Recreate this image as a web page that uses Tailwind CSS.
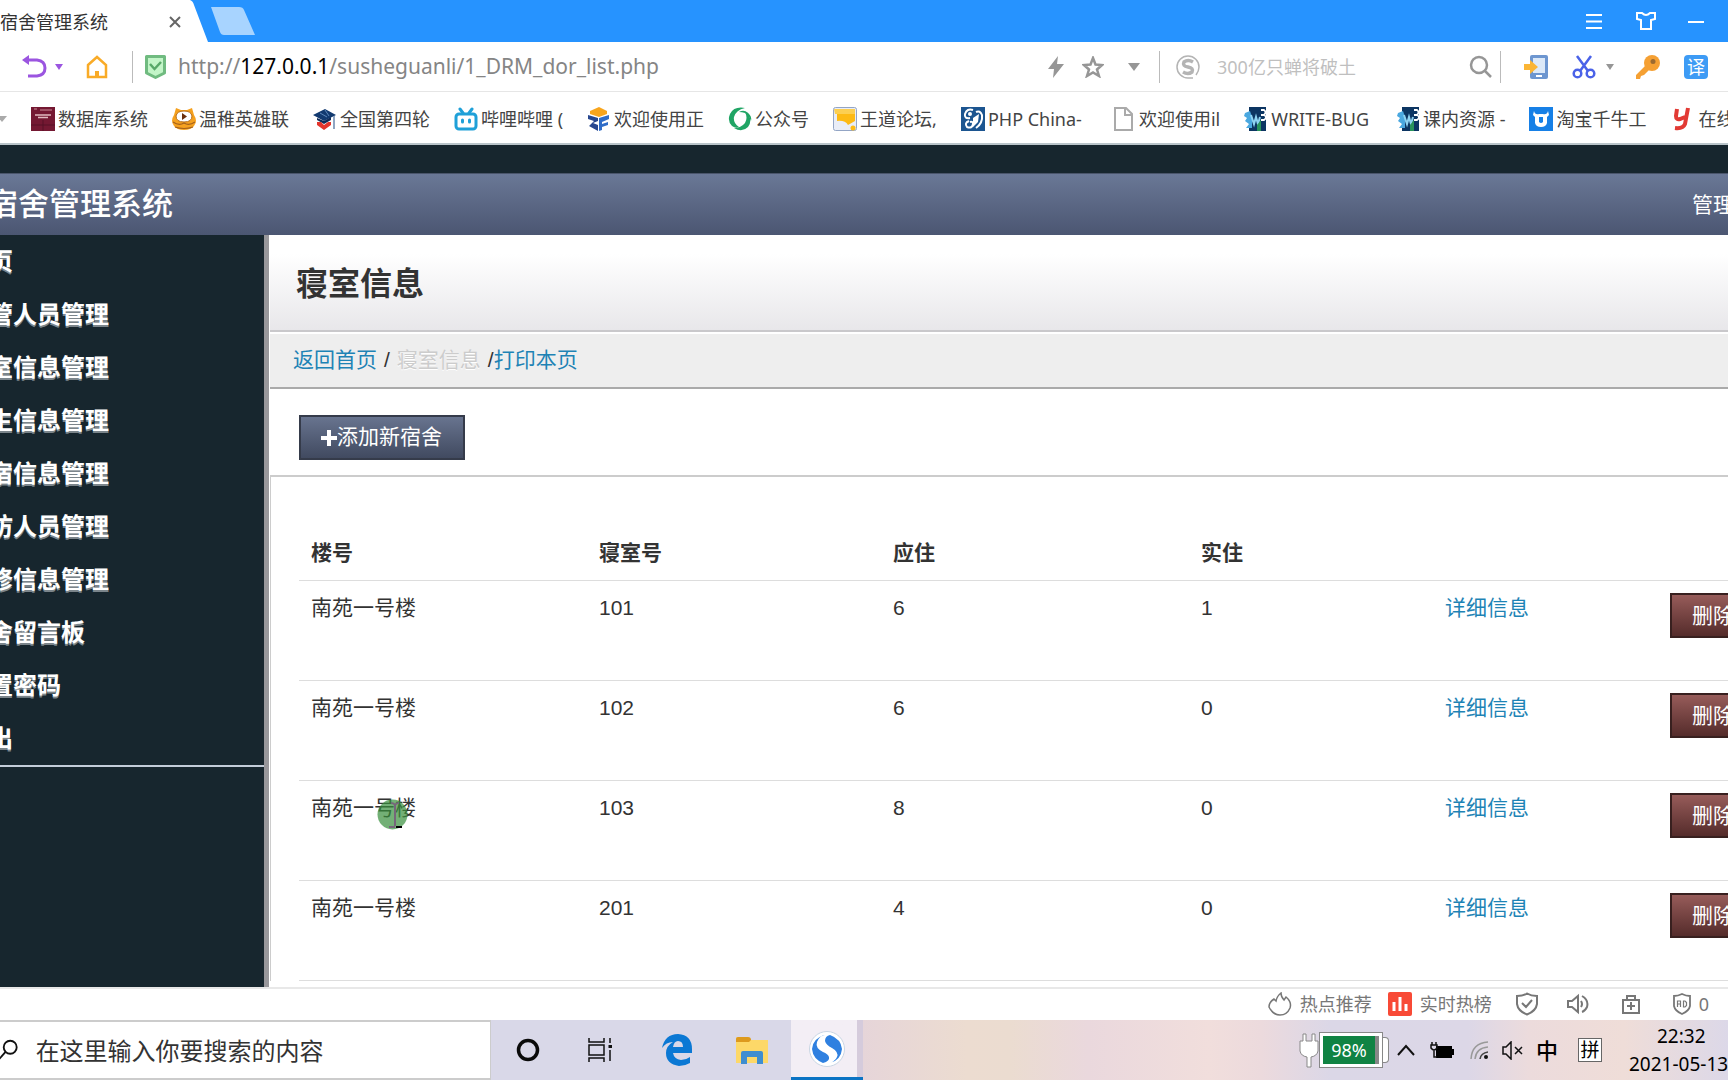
<!DOCTYPE html>
<html lang="zh-CN">
<head>
<meta charset="utf-8">
<meta name="viewport" content="width=device-width, initial-scale=1">
<title>宿舍管理系统</title>
<script src="https://cdn.jsdelivr.net/npm/@tailwindcss/browser@4"></script>
</head>
<body class="flex h-screen flex-col overflow-hidden bg-white font-['Noto_Sans','Noto_Sans_CJK_SC',sans-serif] text-lg text-[#444]">

<!-- Tab strip -->
<header class="flex h-[42px] shrink-0 bg-[#2693ff]">
  <div class="flex h-full w-[190px] items-center bg-white pt-0.5">
    <span class="flex-1 whitespace-nowrap text-[#333]">宿舍管理系统</span>
    <button aria-label="关闭标签" class="mr-[9px]"><svg class="size-3" viewBox="0 0 12 12" fill="none" stroke="#666" stroke-width="2"><path d="M1 1l10 10M11 1L1 11"/></svg></button>
  </div>
  <svg class="h-full w-[18px]" viewBox="0 0 18 42" fill="#fff"><path d="M0 0Q3 1 4 5L18 42H0Z"/></svg>
  <button aria-label="新标签" class="ml-0.5"><svg class="h-7 w-[45px]" viewBox="0 0 45 28"><path d="M1 0H29Q33 0 34 3L45 28H14Q11 28 10 25Z" fill="#a8d4ff"/></svg></button>
  <div class="ml-auto flex items-center gap-8 pr-6">
    <button aria-label="菜单"><svg class="h-5 w-4" viewBox="0 0 16 20" stroke="#fff" stroke-width="2"><path d="M0 4H16M0 10.500H16M0 17H16"/></svg></button>
    <button aria-label="皮肤" class="ml-0.5"><svg class="size-5" viewBox="0 0 20 20" fill="none" stroke="#fff" stroke-width="2"><path d="M1 2H6Q10 6 14 2H19V8L15 9V18H5V9L1 8Z"/></svg></button>
    <button aria-label="最小化"><svg class="h-5 w-4" viewBox="0 0 16 20" stroke="#fff" stroke-width="2"><path d="M0 11H16"/></svg></button>
  </div>
</header>

<!-- Address bar -->
<div class="flex h-[50px] shrink-0 items-center border-b border-[#e6e6e6] pr-5">
  <button aria-label="后退" class="ml-[22px]"><svg class="h-6 w-[25px]" viewBox="0 0 25 24" fill="none" stroke="#9b55e0" stroke-width="3"><path d="M4 5H15Q23 6 23 13T15 21H6"/><path d="M0 5L7 0V10Z" fill="#9b55e0" stroke="none"/></svg></button>
  <svg class="ml-2 h-1.5 w-2" viewBox="0 0 8 6" fill="#9b55e0"><path d="M0 0H8L4 6Z"/></svg>
  <button aria-label="主页" class="ml-[23px]"><svg class="h-6 w-[22px]" viewBox="0 0 22 24" fill="none" stroke="#f9ab27" stroke-width="2.500"><path d="M2 10L11 2L20 10V22H2Z"/><path d="M9 23V16H13V23Z" fill="#f9ab27" stroke="none"/></svg></button>
  <span class="ml-6 h-8 w-px bg-[#bbb]"></span>
  <svg class="ml-3 h-6 w-[21px]" viewBox="0 0 21 24"><path d="M1.500 1.500H19.500V18L10.500 22.500L1.500 18Z" fill="#c3f5c8" stroke="#70bb80" stroke-width="3" stroke-linejoin="round"/><path d="M5 9L9.500 14L16 7" fill="none" stroke="#58a868" stroke-width="2.500"/></svg>
  <div contenteditable="true" role="textbox" aria-label="网址" class="ml-3 flex-1 whitespace-nowrap text-[21px] text-[#858585]">http://<span class="text-black">127.0.0.1</span>/susheguanli/1_DRM_dor_list.php</div>
  <button aria-label="极速模式"><svg class="h-[22px] w-4" viewBox="0 0 16 22" fill="#969696"><path d="M10 0L0 13H6L5 22L16 8H9Z"/></svg></button>
  <button aria-label="收藏" class="ml-[18px]"><svg class="size-[22px]" viewBox="0 0 22 22" fill="none" stroke="#969696" stroke-width="2.500"><path d="M11 2L13.500 8.500L20 9L15 13.500L17 20L11 16.500L5 20L7 13.500L2 9L8.500 8.500Z"/></svg></button>
  <svg class="ml-6 h-2 w-3" viewBox="0 0 12 8" fill="#969696"><path d="M0 0H12L6 8Z"/></svg>
  <span class="ml-[19px] h-8 w-px bg-[#bbb]"></span>
  <svg class="ml-4 size-6" viewBox="0 0 24 24" fill="none" stroke="#b4b4b4"><path d="M20 20Q23 16 23 12A11 11 0 1 0 12 23H17" stroke-width="1.500"/><path d="M17 7Q12 4 8 7Q6 11 12 12Q18 13 16 17Q12 20 7 17" stroke-width="3.500"/></svg>
  <input type="text" aria-label="搜索" placeholder="300亿只蝉将破土" class="ml-[17px] w-[252px] bg-transparent text-lg outline-none placeholder:text-[#bfbfbf]">
  <button aria-label="搜索按钮"><svg class="size-[23px]" viewBox="0 0 23 23" fill="none" stroke="#969696" stroke-width="2.500"><circle cx="10" cy="10" r="8"/><path d="M16 16L22 22"/></svg></button>
  <span class="ml-2 h-8 w-px bg-[#bbb]"></span>
  <button aria-label="手机" class="ml-[23px]"><svg class="size-6" viewBox="0 0 24 24"><rect x="6" y="0" width="18" height="24" rx="2" fill="#6d96d0"/><rect x="9" y="3" width="12" height="15" fill="#dce9f8"/><rect x="12" y="20" width="6" height="2" fill="#fff"/><path d="M0 9H6V5L14 12L6 19V15H0Z" fill="#fbb535"/></svg></button>
  <button aria-label="截图" class="ml-6"><svg class="size-6" viewBox="0 0 24 24" fill="none" stroke="#4a62e8" stroke-width="2.500"><path d="M5 1L16 16M19 1L8 16"/><circle cx="5.500" cy="18.500" r="3.800"/><circle cx="18.500" cy="18.500" r="3.800"/></svg></button>
  <svg class="ml-2.5 h-1.5 w-2" viewBox="0 0 8 6" fill="#969696"><path d="M0 0H8L4 6Z"/></svg>
  <button aria-label="密码" class="ml-[22px]"><svg class="size-6" viewBox="0 0 24 24"><circle cx="16" cy="8" r="8" fill="#f5a033"/><path d="M9 11L0 20V24H4L5 21L8 20L13 15Z" fill="#f5a033"/><circle cx="17" cy="6.500" r="2.500" fill="#9c6a30"/></svg></button>
  <button aria-label="翻译" class="ml-6 size-6 rounded bg-[#3d9bf5] text-lg leading-6 text-white">译</button>
</div>

<!-- Bookmarks -->
<nav class="flex h-[53px] shrink-0 items-center gap-6 overflow-hidden whitespace-nowrap border-b-2 border-[#b9c4c9] pt-0.5">
  <svg class="h-1.5 w-[7px] shrink-0" viewBox="0 0 7 6" fill="#aaa"><path d="M-3 0H7L2 6Z"/></svg>
  <a href="#" class="flex items-center gap-[3px]"><svg class="size-6" viewBox="0 0 24 24"><path fill="#741832" d="M0 0H24V24H0Z"/><path d="M4 8H20M7 10.500H17" stroke="#e0b8be" stroke-width="1.500"/><path d="M3 2H6M9 3H21" stroke="#c98a96"/><path d="M0 18H24M12 13V24" stroke="#571026"/></svg>数据库系统</a>
  <a href="#" class="flex items-center gap-[3px]"><svg class="size-6" viewBox="0 0 24 24"><path d="M2 8L4 1L9 3H15L20 1L22 8Q26 14 22 19Q19 23 12 23T2 19Q-2 14 2 8Z" fill="#f5a11f"/><path d="M4 9Q5 4 12 4T20 9Q20 15 12 15T4 9Z" fill="#fff" stroke="#b86e18"/><path d="M10 6L15 9.500L10 13Z" fill="#6b2f0c"/><path d="M1 15Q7 19 12 16Q17 19 23 15M3 20Q12 23 21 20" fill="none" stroke="#a4601a" stroke-width="1.200"/></svg>温稚英雄联</a>
  <a href="#" class="flex items-center gap-[3px]"><svg class="size-6" viewBox="0 0 24 24"><path d="M0 8L12 2L23 8L11 14Z" fill="#123a70"/><path d="M4 11V13L11 17L18 13V10L11 14Z" fill="#0e2c5a"/><path d="M4 15L8 15L11 18L15 15H18V18L11 23L4 18Z" fill="#e3352c"/><path d="M7 6L14 10M12 3L16 9" stroke="#5d88bb"/><path d="M21 9V22" stroke="#8fa5c2" stroke-width="2"/></svg>全国第四轮</a>
  <a href="#" class="flex items-center gap-[3px]"><svg class="size-6" viewBox="0 0 24 24" fill="none" stroke="#1fa0d8" stroke-width="3" stroke-linecap="round"><rect x="2" y="7" width="20" height="15" rx="3"/><path d="M6 2L9 6M18 2L15 6M8.500 13V15M15.500 13V15"/></svg>哔哩哔哩 (</a>
  <a href="#" class="flex items-center gap-[3px]"><svg class="size-6" viewBox="0 0 24 24"><path d="M3 4L12 0L20 4V7L12 10L3 7Z" fill="#f8a51c"/><path d="M1 8L11 11V14L6 16L11 18V24L2 19L7 14L1 12Z" fill="#27478f"/><path d="M12 11L22 8V12L15 15V17L21 15V18L15 20V23L12 24Z" fill="#2f6cc8"/></svg>欢迎使用正</a>
  <a href="#" class="flex items-center gap-[3px]"><svg class="size-6" viewBox="0 0 24 24" fill="#20a565"><path d="M17 1Q6 -1 2 7Q-1 14 4 19Q8 22 11 20Q5 16 6 10Q8 3 17 1Z"/><path d="M6 21Q14 26 20 20Q24 15 21 8Q20 5 17 5Q20 11 17 16Q13 21 6 21Z"/><path d="M11 5Q16 2 20 6Q24 9 23 14Q21 8 17 6Q14 5 11 5Z"/></svg>公众号</a>
  <a href="#" class="flex items-center gap-[3px]"><svg class="size-6" viewBox="0 0 24 24"><rect x=".5" y=".5" width="23" height="23" rx="2" fill="#e9edf7" stroke="#93a5c5"/><path d="M4 3L22 2L22 14L15 18Q12 13 4 14Z" fill="#fdba15"/><path d="M1 2H22V7H2Z" fill="#fccf52"/><circle cx="20" cy="21" r="2.500" fill="#fdba15"/></svg>王道论坛,</a>
  <a href="#" class="flex items-center gap-[3px]"><svg class="size-6" viewBox="0 0 24 24"><path fill="#1c5590" d="M0 0H24V24H0Z"/><path d="M12 3Q6 1 4 7Q3 12 9 11M8 14Q3 16 6 20Q11 22 12 17Q12 14 9 15M15 21Q22 16 21 8Q19 3 15 5" fill="none" stroke="#fff" stroke-width="2"/><circle cx="9" cy="7" r="2" fill="#fff"/><path d="M12 11L18 7L17 15L12 20Z" fill="#fff"/></svg>PHP China-</a>
  <a href="#" class="ml-2 flex items-center gap-[5px]"><svg class="h-6 w-5" viewBox="0 0 20 24" fill="none" stroke="#aaa" stroke-width="2"><path d="M1 1H12L18 7V23H1ZM11 1V8H18"/></svg>欢迎使用il</a>
  <a href="#" class="flex items-center gap-[3px]"><svg class="size-6" viewBox="0 0 24 24"><path d="M5 0H22V24H5Z" fill="#0c3562"/><path d="M1 6L6 4L8 10V21H2L5 17L1 14L3 11L0 9Z" fill="#4aa8e0"/><path d="M7 8L10 17L12 10L14 17L16 10" fill="none" stroke="#8ed3f2" stroke-width="2"/><path d="M17 3H20Q23 5 20 8Q24 10 20 13H17M17 8H20" fill="none" stroke="#fff" stroke-width="1.800"/><path d="M13 18L17 13V24H13Z" fill="#29935b"/></svg>WRITE-BUG</a>
  <a href="#" class="ml-1 flex items-center gap-0.5"><svg class="size-6" viewBox="0 0 24 24"><path d="M5 0H22V24H5Z" fill="#0c3562"/><path d="M1 6L6 4L8 10V21H2L5 17L1 14L3 11L0 9Z" fill="#4aa8e0"/><path d="M7 8L10 17L12 10L14 17L16 10" fill="none" stroke="#8ed3f2" stroke-width="2"/><path d="M17 3H20Q23 5 20 8Q24 10 20 13H17M17 8H20" fill="none" stroke="#fff" stroke-width="1.800"/><path d="M13 18L17 13V24H13Z" fill="#29935b"/></svg>课内资源 -</a>
  <a href="#" class="flex items-center gap-[3px]"><svg class="size-6" viewBox="0 0 24 24"><path fill="#1780e6" d="M0 0H24V24H0Z"/><path d="M5 4Q6 8 10 7H14Q18 8 19 4L20 8L18 10V16Q17 20 12 20T6 16V10L4 8Z" fill="#fff"/><path d="M10 10H14V15Q12 17 10 15Z" fill="#1780e6"/></svg>淘宝千牛工</a>
  <a href="#" class="ml-1 flex items-center gap-2"><svg class="h-6 w-4" viewBox="0 0 16 24" fill="none" stroke="#e23a34" stroke-width="4"><path d="M3 2L2 9Q2 13 6 12L11 10M14 1L11 17Q9 22 1 21"/></svg>在线</a>
</nav>

<!-- Web page viewport -->
<div class="flex min-h-0 flex-1 flex-col overflow-hidden bg-[#17262e] font-['Liberation_Sans','Noto_Sans_CJK_SC',sans-serif] text-[21px] text-[#333]">
  <div class="flex h-[90px] shrink-0 items-end">
    <div class="flex h-[62px] w-full items-center justify-between overflow-hidden border-t border-[#4a556b] bg-linear-to-b from-[#6a7896] to-[#4b5672] pt-0.5 text-white">
      <h1 class="-ml-[13px] whitespace-nowrap font-['Liberation_Serif','Noto_Sans_CJK_SC',serif] text-[31px] font-medium">宿舍管理系统</h1>
      <span class="-mr-1.5 whitespace-nowrap">管理</span>
    </div>
  </div>
  <div class="flex min-h-0 flex-1">
    <aside class="w-[264px] shrink-0 overflow-hidden">
      <ul class="border-b-2 border-[#c3cdd9] text-2xl font-bold leading-[53px] text-white [text-shadow:0_2px_0_#7b858b]">
        <li><a href="#" class="-ml-[11px]">页</a></li>
        <li><a href="#" class="-ml-[11px]">管人员管理</a></li>
        <li><a href="#" class="-ml-[11px]">室信息管理</a></li>
        <li><a href="#" class="-ml-[11px]">生信息管理</a></li>
        <li><a href="#" class="-ml-[11px]">宿信息管理</a></li>
        <li><a href="#" class="-ml-[11px]">访人员管理</a></li>
        <li><a href="#" class="-ml-[11px]">修信息管理</a></li>
        <li><a href="#" class="-ml-[11px]">舍留言板</a></li>
        <li><a href="#" class="-ml-[11px]">置密码</a></li>
        <li><a href="#" class="-ml-[11px]">出</a></li>
      </ul>
    </aside>
    <main class="min-w-0 flex-1 overflow-hidden border-l-[5px] border-[#98979b] bg-white pl-px">
      <div class="flex h-[97px] items-center border-b-2 border-[#c9c8cb] bg-linear-to-b from-white from-20% to-[#e8e7ea] pl-[26px] pt-1">
        <h2 class="text-[32px] font-bold">寝室信息</h2>
      </div>
      <div class="flex h-[57px] items-center border-b-2 border-t-2 border-b-[#aaa] border-t-white bg-[#eee] pl-[23px]"><a href="#" class="text-[#1e83b5]">返回首页</a><span class="mx-[7px]">/</span><span class="text-[#ccc] [text-shadow:0_1px_0_#fff]">寝室信息</span><span class="ml-[7px]">/</span><a href="#" class="text-[#1e83b5]">打印本页</a></div>
      <div class="px-[29px] pb-[15px] pt-[26px]">
        <button class="flex h-[45px] w-[166px] items-center border-2 border-[#353b4a] bg-linear-to-b from-[#68748f] to-[#414a60] pl-5 text-white"><svg class="size-4" viewBox="0 0 16 16" fill="#fff"><path d="M6 0H10V6H16V10H10V16H6V10H0V6H6Z"/></svg>添加新宿舍</button>
      </div>
      <section class="border-l border-t-2 border-[#ccc] pl-7 pt-[51px]">
        <table class="w-full table-fixed border-collapse text-left">
          <colgroup><col class="w-[288px]"><col class="w-[294px]"><col class="w-[308px]"><col class="w-[244px]"><col class="w-[213px]"><col></colgroup>
          <thead>
            <tr class="h-[52px] font-bold"><th class="pl-3">楼号</th><th class="pl-3">寝室号</th><th class="pl-3">应住</th><th class="pl-3">实住</th><th></th><th></th></tr>
          </thead>
          <tbody class="leading-[29px]">
            <tr class="h-[100px] border-t border-[#ddd] align-top"><td class="pl-3 pt-3">南苑一号楼</td><td class="pl-3 pt-3">101</td><td class="pl-3 pt-3">6</td><td class="pl-3 pt-3">1</td><td class="pl-3 pt-3"><a href="#" class="text-[#1e83b5]">详细信息</a></td><td class="pl-6 pt-3"><button class="flex h-[45px] w-[87px] items-center border-2 border-[#38201f] bg-linear-to-b from-[#975c5a] to-[#552c2b] pl-5 text-white whitespace-nowrap">删除</button></td></tr>
            <tr class="h-[100px] border-t border-[#ddd] align-top"><td class="pl-3 pt-3">南苑一号楼</td><td class="pl-3 pt-3">102</td><td class="pl-3 pt-3">6</td><td class="pl-3 pt-3">0</td><td class="pl-3 pt-3"><a href="#" class="text-[#1e83b5]">详细信息</a></td><td class="pl-6 pt-3"><button class="flex h-[45px] w-[87px] items-center border-2 border-[#38201f] bg-linear-to-b from-[#975c5a] to-[#552c2b] pl-5 text-white whitespace-nowrap">删除</button></td></tr>
            <tr class="h-[100px] border-t border-[#ddd] align-top"><td class="relative pl-3 pt-3">南苑一号楼
              <svg class="absolute left-[78px] top-[18px] size-[31px]" viewBox="0 0 31 31"><circle cx="15.500" cy="15.500" r="15" fill="#388e3c" fill-opacity=".7"/><path d="M14 4Q17 4 18 6Q19 4 22 4M18 6V27M12 28H18" fill="none" stroke="#76667a" stroke-width="2"/><path d="M19 28H25" stroke="#000" stroke-width="2"/></svg></td><td class="pl-3 pt-3">103</td><td class="pl-3 pt-3">8</td><td class="pl-3 pt-3">0</td><td class="pl-3 pt-3"><a href="#" class="text-[#1e83b5]">详细信息</a></td><td class="pl-6 pt-3"><button class="flex h-[45px] w-[87px] items-center border-2 border-[#38201f] bg-linear-to-b from-[#975c5a] to-[#552c2b] pl-5 text-white whitespace-nowrap">删除</button></td></tr>
            <tr class="h-[100px] border-b border-t border-[#ddd] align-top"><td class="pl-3 pt-3">南苑一号楼</td><td class="pl-3 pt-3">201</td><td class="pl-3 pt-3">4</td><td class="pl-3 pt-3">0</td><td class="pl-3 pt-3"><a href="#" class="text-[#1e83b5]">详细信息</a></td><td class="pl-6 pt-3"><button class="flex h-[45px] w-[87px] items-center border-2 border-[#38201f] bg-linear-to-b from-[#975c5a] to-[#552c2b] pl-5 text-white whitespace-nowrap">删除</button></td></tr>
          </tbody>
        </table>
      </section>
    </main>
  </div>
</div>

<!-- Browser status bar -->
<footer class="flex h-[33px] shrink-0 items-center justify-end border-t-2 border-[#e8e8e8] pb-0.5 pr-[19px] text-[#777]">
  <a href="#" class="flex items-center gap-2"><svg class="size-6" viewBox="0 0 24 24" fill="none" stroke="#777" stroke-width="1.500"><path d="M6 7L8 9Q9 4 13 1Q13 5 16 8L18 5Q24 10 22 16Q19 23 12 23T1 15Q1 10 6 7Z"/></svg>热点推荐</a>
  <a href="#" class="ml-4 flex items-center gap-2"><svg class="size-6" viewBox="0 0 24 24"><rect width="24" height="24" rx="2" fill="#f84a36"/><path d="M6 10V19M12 5V19M18 12V19" stroke="#fff" stroke-width="3"/></svg>实时热榜</a>
  <button aria-label="安全" class="ml-6"><svg class="h-6 w-[22px]" viewBox="0 0 22 24" fill="none" stroke="#777" stroke-width="2"><path d="M11 1.500Q15 4 21 4V12Q20 19 11 22.500Q2 19 1 12V4Q7 4 11 1.500ZM6 11L10 15L16 8"/></svg></button>
  <button aria-label="音量" class="ml-[29px]"><svg class="size-[22px]" viewBox="0 0 22 22" fill="none" stroke="#777" stroke-width="2"><path d="M1 8V14H5L11 19V3L5 8ZM14 8Q16 11 14 14M15 3Q22 7 20 14Q18 18 15 19"/></svg></button>
  <button aria-label="修复" class="ml-8"><svg class="size-5" viewBox="0 0 20 20" fill="none" stroke="#777" stroke-width="2"><path d="M2 6H18V19H2ZM6 6V2H14V6M6 12H14M10 8V16"/></svg></button>
  <button aria-label="广告拦截" class="ml-8 flex items-center gap-2"><svg class="h-[22px] w-[18px]" viewBox="0 0 18 22" fill="none" stroke="#777"><path d="M9 1Q13 3 17 3V13Q16 18 9 21Q2 18 1 13V3Q5 3 9 1Z" stroke-width="1.800"/><path d="M4.500 14V8H7.500V14M4.500 11H7.500M10.500 8H12L13.500 9.500V12.500L12 14H10.500Z" stroke-width="1.200"/></svg>0</button>
</footer>

<!-- Taskbar -->
<div class="flex h-[60px] shrink-0 items-center overflow-hidden bg-[#d9d8e8] text-black">
  <label class="flex h-full w-[491px] items-center border-y-2 border-r border-[#ccc] bg-white">
    <svg class="h-6 w-[19px]" viewBox="0 0 19 24" fill="none" stroke="#111" stroke-width="2"><circle cx="11" cy="9" r="7"/><path d="M6 14L-1 22"/></svg>
    <input type="text" placeholder="在这里输入你要搜索的内容" class="ml-[18px] w-full pt-0.5 text-2xl outline-none placeholder:text-[#333]">
  </label>
  <div class="flex h-full w-[300px] items-center bg-[#d9d8e8]">
    <button aria-label="语音助手" class="ml-[25px]"><svg class="size-6" viewBox="0 0 24 24" fill="none" stroke="#0a0a0a" stroke-width="3.500"><circle cx="12" cy="12" r="9.500"/></svg></button>
    <button aria-label="任务视图" class="ml-12"><svg class="size-6" viewBox="0 0 24 24" fill="none" stroke="#111" stroke-width="1.500"><path d="M1 0V4H16V0M1 24V20H16V24M1 7H16V17H1ZM22 0V5M22 12V23"/><path d="M20.500 7H24V10H20.500Z" fill="#111" stroke="none"/></svg></button>
    <button aria-label="浏览器" class="ml-[50px]"><svg class="h-8 w-[30px]" viewBox="0 0 30 32"><path d="M0 14Q3 0 16 0Q30 1 30 15V19H11Q12 25 19 26Q24 26 28 23V29Q23 32 17 32Q4 30 4 19Q4 12 11 8Q4 8 0 14ZM11 13H21Q21 7 16 7Q12 7 11 13Z" fill="#0b78d4" fill-rule="evenodd"/></svg></button>
    <button aria-label="文件管理器" class="ml-11"><svg class="h-[27px] w-8" viewBox="0 0 32 27"><path d="M0 2Q0 0 2 0H12L15 3H32V26H0Z" fill="#fdd868"/><path d="M0 2Q0 0 2 0H12Q15 0 15 3L13 5H0Z" fill="#dd9a1e"/><path d="M5 16Q5 14 7 14H25Q27 14 27 16V27H21V20H11V27H5Z" fill="#3f8ed0"/></svg></button>
  </div>
  <button aria-label="搜狗浏览器" class="flex h-full w-[72px] items-center border-b-[3px] border-[#0b74c4] bg-linear-to-r from-[#f3eef5] from-92% to-[#d5cbdc] to-92% pl-[18px]"><svg class="size-9" viewBox="0 0 36 36"><circle cx="18" cy="18" r="17.500" fill="#fff" stroke="#c9d5e3"/><path d="M16 4Q4 7 3 18Q4 28 14 32Q21 30 20 26Q19 23 14 21Q6 17 8 11Q10 5 16 4ZM21 4Q16 5 16 10Q17 14 23 17Q30 21 28 26Q26 30 21 32Q32 29 33 18Q32 8 21 4Z" fill="#2f80e0"/></svg></button>
  <div class="flex h-full min-w-0 flex-1 items-center justify-end bg-[linear-gradient(90deg,#e6d5d9_0%,#ecdcd0_12%,#ebdcd0_17%,#ead8dd_26%,#f1dedc_40%,#ecdadd_46%,#dbd7e7_54%,#dcd7e7_70%,#ecdbdc_77%,#efddd8_88%,#dcd8e8_100%)]">
    <svg class="h-[35px] w-5 shrink-0" viewBox="0 0 20 35" fill="#fff" stroke="#888"><path d="M4 8V1H7V8H13V1H16V8H19V18Q18 23 12 24V34H8V24Q2 23 1 18V8Z"/></svg>
    <div class="flex h-9 w-[64px] shrink-0 items-center border border-[#888] bg-white p-[3px]"><span class="h-full flex-1 border-r-4 border-[#888] bg-[#108343] text-center text-[18px] leading-7 text-white">98%</span></div>
    <span class="h-[26px] w-1.5 shrink-0 rounded-r-sm border border-l-0 border-[#888] bg-white"></span>
    <button aria-label="显示隐藏的图标" class="ml-2"><svg class="h-3 w-[18px]" viewBox="0 0 18 12" fill="none" stroke="#111" stroke-width="2"><path d="M1 11L9 2L17 11"/></svg></button>
    <svg class="ml-[15px] h-[17px] w-6 shrink-0" viewBox="0 0 24 17"><path d="M6 4H22V7H24V13H22V16H6Z"/><path d="M2 0V3M6 0V3M1 3H7V6Q4 10 1 6ZM4 8V15H7" fill="none" stroke="#111" stroke-width="1.500"/></svg>
    <svg class="ml-4 size-[18px] shrink-0" viewBox="0 0 18 18" fill="none" stroke="#999" stroke-width="1.500"><path d="M1 18Q2 2 18 1M5 18Q6 7 18 6"/><path d="M10 18Q11 12 18 11" stroke="#444"/><circle cx="16" cy="16" r="2" fill="#111" stroke="none"/></svg>
    <svg class="ml-3.5 h-[19px] w-[21px] shrink-0" viewBox="0 0 21 19" fill="none" stroke="#111" stroke-width="1.500"><path d="M1 6V13H4L9 18V1L4 6ZM13 6L20 13M20 6L13 13"/></svg>
    <button class="ml-[13px] text-[22px] font-medium leading-none">中</button>
    <button class="ml-5 size-6 shrink-0 border border-[#666] bg-white text-[19px] leading-[22px]"><span class="block text-center">拼</span></button>
    <div class="ml-[27px] w-[99px] shrink-0 whitespace-nowrap text-[19px] leading-7"><div class="pl-7">22:32</div><div>2021-05-13</div></div>
  </div>
</div>
</body>
</html>
